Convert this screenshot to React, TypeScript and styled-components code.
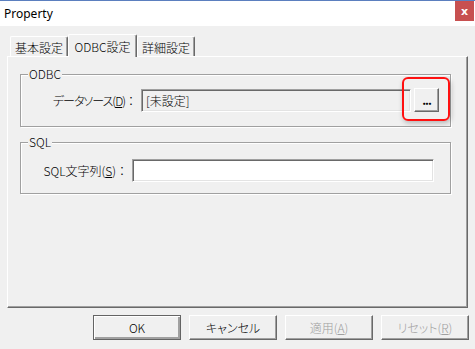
import React from "react";
import styled, {createGlobalStyle} from "styled-components";



const GlobalStyle = createGlobalStyle`
  html, body { margin: 0; padding: 0; background: #f0f0f0; }
  body {
    font: 12px "Noto Sans CJK JP", "Noto Sans", sans-serif;
    color: black;
  }
`

const tabs = [
    { id: 'basic', title: '基本設定' },
    { id: 'odbc', title: 'ODBC設定' },
    { id: 'detail', title: '詳細設定' },
]

const App = () => {
    return <Window>
        <GlobalStyle/>

        <TitleBar>
            <Title>Property</Title>
            <CloseButton>x</CloseButton>
        </TitleBar>

        <Body>
            <TabStrip>
                { tabs.map(it=><Tab key={it.id} $selected={it.id==='odbc'}>{it.title}</Tab>) }
            </TabStrip>

            <Panel>
                <Group $padTop={6} $padBottom={14}>
                    <Legend>ODBC</Legend>
                    <Row $fieldLeft={120}>
                        <Label $spacing={-1}>データソース(<u>D</u>)<Colon>：</Colon></Label>
                        <Field $width={270} $readOnly>[未設定]</Field>
                        <BrowseBox>
                            <SmallButton>...</SmallButton>
                            <Highlight/>
                        </BrowseBox>
                    </Row>
                </Group>

                <Group $padTop={9} $padBottom={11}>
                    <Legend>SQL</Legend>
                    <Row $fieldLeft={111}>
                        <Label>SQL文字列(<u>S</u>)<Colon>：</Colon></Label>
                        <Field $width={302}/>
                    </Row>
                </Group>
            </Panel>

            <ButtonRow>
                <DialogButton $default>OK</DialogButton>
                <DialogButton>キャンセル</DialogButton>
                <DialogButton disabled>適用(<u>A</u>)</DialogButton>
                <DialogButton disabled>リセット(<u>R</u>)</DialogButton>
            </ButtonRow>
        </Body>
    </Window>
}
export default App



const Window = styled.div`
  width: 475px; height: 349px;
  display: flex; flex-direction: column;
  background: #f0f0f0;
  overflow: hidden;
`

const TitleBar = styled.div`
  height: 25px;
  flex: none;
  display: flex; align-items: center; justify-content: space-between;
  background: white;
  border-top: 1px solid #5b7fbf;
  padding-left: 4px;
`

const Title = styled.div`
  font: 12px "Noto Sans", sans-serif;
  margin-top: -1px;
`

const CloseButton = styled.div`
  width: 19px; height: 20px;
  align-self: flex-start;
  margin-right: 1px;
  background: #c75050;
  color: white;
  font: bold 11px "DejaVu Sans", sans-serif;
  display: flex; align-items: center; justify-content: center;
`

const Body = styled.div`
  flex: 1;
  padding: 8px 7px 0 7px;
  display: flex; flex-direction: column;
`

const TabStrip = styled.div`
  height: 22px;
  display: flex; align-items: flex-end;
  padding-left: 3px;
  position: relative;
  z-index: 1;
`

const Tab = styled.div<{ $selected?: boolean }>`
  box-sizing: border-box;
  width: ${p=>p.$selected ? 69 : 58}px;
  height: ${p=>p.$selected ? 23 : 20}px;
  margin-bottom: ${p=>p.$selected ? -1 : 0}px;
  background: #f0f0f0;
  border-top: 1px solid white;
  border-left: 1px solid white;
  border-right: 1px solid #696969;
  box-shadow: inset -1px 0 0 #a0a0a0;
  border-radius: 2px 2px 0 0;
  display: flex; align-items: center; justify-content: center;
  padding-top: ${p=>p.$selected ? 0 : 1}px;
  font-weight: 300;
  font-feature-settings: "palt" 1;
`

const Panel = styled.div`
  box-sizing: border-box;
  height: 252px;
  border-top: 1px solid white;
  border-left: 1px solid white;
  border-right: 1px solid #696969;
  border-bottom: 1px solid #696969;
  box-shadow: inset -1px -1px 0 #a0a0a0;
  padding: 9px 16px 0 12px;
  display: flex; flex-direction: column; gap: 7px;
`

const Group = styled.fieldset<{ $padTop: number, $padBottom: number }>`
  margin: 0;
  border: 1px solid #a0a0a0;
  box-shadow: inset 1px 1px 0 white, 1px 1px 0 white;
  padding: ${p=>p.$padTop}px 0 ${p=>p.$padBottom}px 0;
`

const Legend = styled.legend`
  margin-left: 7px;
  padding: 0 1px;
  line-height: 16px;
  background: #f0f0f0;
  font-weight: 300;
`

// label is right aligned, so the field starts at the same x as in the original dialog
const Row = styled.div<{ $fieldLeft: number }>`
  display: grid;
  grid-template-columns: ${p=>p.$fieldLeft}px auto auto;
  align-items: center;
  justify-content: start;
  font-feature-settings: "palt" 1;
  font-weight: 300;
`

const Label = styled.div<{ $spacing?: number }>`
  justify-self: end;
  margin-right: 4px;
  white-space: nowrap;
  letter-spacing: ${p=>p.$spacing ?? 0}px;
`

const Colon = styled.span`
  font-feature-settings: normal;
  letter-spacing: 0;
`

const Field = styled.div<{ $width: number, $readOnly?: boolean }>`
  box-sizing: border-box;
  width: ${p=>p.$width}px; height: 23px;
  background: ${p=>p.$readOnly ? '#f0f0f0' : 'white'};
  border-top: 1px solid #a0a0a0;
  border-left: 1px solid #a0a0a0;
  border-right: 1px solid white;
  border-bottom: 1px solid white;
  box-shadow: inset 1px 1px 0 #696969, inset -1px -1px 0 #e3e3e3;
  padding: 1px 4px 0;
  display: flex; align-items: center;
`

const BrowseBox = styled.div`
  position: relative;
  margin-left: 3px;
  display: flex;
`

const Highlight = styled.div`
  position: absolute;
  left: -12px; top: -11px;
  width: 48px; height: 44px;
  box-sizing: border-box;
  border: 2px solid #ff1010;
  border-radius: 6px;
  box-shadow: 1px 2px 5px rgba(0,0,0,0.25);
  pointer-events: none;
`

const raised = `
  box-sizing: border-box;
  background: #f0f0f0;
  border-top: 1px solid white;
  border-left: 1px solid white;
  border-right: 1px solid #696969;
  border-bottom: 1px solid #696969;
  box-shadow: inset -1px -1px 0 #a0a0a0;
  font: 300 12px "Noto Sans CJK JP", "Noto Sans", sans-serif;
  font-feature-settings: "palt" 1;
  color: black;
  padding: 0;
  display: flex; align-items: center; justify-content: center;
`

const SmallButton = styled.button`
  ${raised}
  width: 25px; height: 24px;
  font-weight: bold;
  letter-spacing: -1px;
  padding-bottom: 2px;
`

const ButtonRow = styled.div`
  display: flex; justify-content: flex-end; gap: 8px;
  margin-top: 7px;
  margin-right: -1px;
`

const DialogButton = styled.button<{ $default?: boolean }>`
  ${raised}
  width: 88px; height: 25px;
  ${p=>p.$default ? `
    outline: 1px solid #646464;
    outline-offset: -1px;
    border-width: 1px;
    box-shadow: inset 1px 1px 0 white, inset -2px -2px 0 #a0a0a0;
  ` : ''}
  &:disabled {
    color: #a0a0a0;
  }
`
